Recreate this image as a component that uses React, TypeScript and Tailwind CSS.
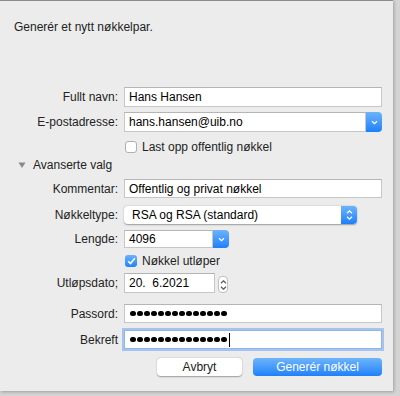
const font = { fontFamily: '"Liberation Sans", Arial, sans-serif' };

function Chevron({ color = "white" }: { color?: string }) {
  return (
    <svg width="7" height="5" viewBox="0 0 7 5">
      <path d="M1 1.2 L3.5 3.6 L6 1.2" fill="none" stroke={color} strokeWidth="1.2" />
    </svg>
  );
}

function UpDown({ color = "white" }: { color?: string }) {
  return (
    <svg width="7" height="12" viewBox="0 0 7 12">
      <path d="M1 4.2 L3.5 1.8 L6 4.2" fill="none" stroke={color} strokeWidth="1.2" />
      <path d="M1 7.8 L3.5 10.2 L6 7.8" fill="none" stroke={color} strokeWidth="1.2" />
    </svg>
  );
}

function Label({ children }: { children: React.ReactNode }) {
  return <div className="w-[118px] shrink-0 text-right text-[12px] text-[#222]">{children}</div>;
}

function Row({ label, className, children }: { label?: string; className: string; children: React.ReactNode }) {
  return (
    <div className={`flex items-center gap-[6px] ${className}`}>
      <Label>{label}</Label>
      {children}
    </div>
  );
}

function TextField({ value, className = "w-[258px]" }: { value: string; className?: string }) {
  return (
    <div className={`flex h-full items-center border border-[#c6c6c6] border-t-[#b5b5b5] bg-white pl-[4px] text-[12px] text-black ${className}`}>
      {value}
    </div>
  );
}

function Dots({ cursor }: { cursor?: boolean }) {
  return (
    <div className="flex items-center gap-[1.5px]">
      {Array.from({ length: 14 }).map((_, i) => (
        <span key={i} className="h-[5.5px] w-[5.5px] rounded-full bg-black" />
      ))}
      {cursor && <span className="ml-[1px] h-[14px] w-[1px] bg-black" />}
    </div>
  );
}

function Checkbox({ checked }: { checked?: boolean }) {
  if (checked)
    return (
      <div className="flex h-[12px] w-[12px] items-center justify-center rounded-[3px] bg-gradient-to-b from-[#69b1fa] to-[#1e84fb]">
        <svg width="9" height="8" viewBox="0 0 9 8">
          <path d="M1.2 4.2 L3.5 6.5 L7.8 1.2" fill="none" stroke="white" strokeWidth="1.6" />
        </svg>
      </div>
    );
  return <div className="h-[12px] w-[12px] rounded-[3px] border border-[#b0b0b0] bg-white" />;
}

export default function App() {
  return (
    <div className="relative h-[396px] w-[400px] overflow-hidden bg-[#d4d4d4]" style={font}>
      <div className="h-[391px] w-[393px] border-t border-[#8c8c8c] bg-[#ececec] shadow-[1px_1px_3px_rgba(0,0,0,0.25)]">
        <div className="mt-[18px] h-[16px] pl-[14px] text-[12px] leading-[16px] text-[#222]">Generér et nytt nøkkelpar.</div>

        <Row label="Fullt navn:" className="mt-[52px] h-[20px]">
          <TextField value="Hans Hansen" />
        </Row>

        <Row label="E-postadresse:" className="mt-[5px] h-[20px]">
          <div className="flex h-full w-[258px]">
            <TextField value="hans.hansen@uib.no" className="flex-1" />
            <div className="flex w-[16px] items-center justify-center rounded-r-[4px] bg-gradient-to-b from-[#6bb2fa] to-[#1a80fb]">
              <Chevron />
            </div>
          </div>
        </Row>

        <Row className="mt-[9px] h-[12px]">
          <div className="ml-[1px] flex items-center gap-[5px]">
            <Checkbox />
            <span className="text-[12px] text-[#222]">Last opp offentlig nøkkel</span>
          </div>
        </Row>

        <div className="mt-[5px] flex h-[14px] items-center pl-[18px]">
          <svg width="8" height="7" viewBox="0 0 8 7">
            <path d="M0.5 0.5 L7.5 0.5 L4 6 Z" fill="#8a8a8a" />
          </svg>
          <span className="ml-[7px] text-[12px] text-[#222]">Avanserte valg</span>
        </div>

        <Row label="Kommentar:" className="mt-[7px] h-[19px]">
          <TextField value="Offentlig og privat nøkkel" />
        </Row>

        <Row label="Nøkkeltype:" className="mt-[8px] h-[18px]">
          <div className="flex h-full w-[233px] rounded-[4px] bg-white shadow-[0_0.5px_1.5px_rgba(0,0,0,0.35)]">
            <div className="flex flex-1 items-center pl-[8px] text-[12px] text-black">RSA og RSA (standard)</div>
            <div className="flex w-[16px] items-center justify-center rounded-r-[4px] bg-gradient-to-b from-[#6bb2fa] to-[#1a80fb]">
              <UpDown />
            </div>
          </div>
        </Row>

        <Row label="Lengde:" className="mt-[6px] h-[18px]">
          <div className="flex h-full w-[105px]">
            <TextField value="4096" className="flex-1" />
            <div className="flex w-[16px] items-center justify-center rounded-r-[4px] bg-gradient-to-b from-[#6bb2fa] to-[#1a80fb]">
              <Chevron />
            </div>
          </div>
        </Row>

        <Row className="mt-[7px] h-[12px]">
          <div className="ml-[1px] flex items-center gap-[5px]">
            <Checkbox checked />
            <span className="text-[12px] text-[#222]">Nøkkel utløper</span>
          </div>
        </Row>

        <Row label="Utløpsdato;" className="mt-[6px] h-[20px]">
          <TextField value="20.  6.2021" className="w-[91px] whitespace-pre" />
          <div className="-ml-[3px] mt-[3px] flex h-[17px] w-[10px] items-center justify-center rounded-[4px] border border-[#c0c0c0] bg-white">
            <UpDown color="#555" />
          </div>
        </Row>

        <Row label="Passord:" className="mt-[11px] h-[19px]">
          <div className="flex h-full w-[258px] items-center border border-[#c6c6c6] border-t-[#b5b5b5] bg-white pl-[5px]">
            <Dots />
          </div>
        </Row>

        <Row label="Bekreft" className="mt-[7px] h-[19px]">
          <div className="flex h-full w-[258px] items-center border border-[#8fb6ea] bg-white pl-[5px] shadow-[0_0_0_2px_rgba(120,170,240,0.6)]">
            <Dots cursor />
          </div>
        </Row>

        <div className="mt-[9px] flex h-[18px] pl-[157px]">
          <div className="flex w-[85px] items-center justify-center rounded-[4px] bg-white text-[12px] text-[#222] shadow-[0_0.5px_1.5px_rgba(0,0,0,0.35)]">
            Avbryt
          </div>
          <div className="ml-[11px] flex w-[129px] items-center justify-center rounded-[4px] bg-gradient-to-b from-[#6cb3fa] to-[#1b81fb] text-[12px] text-white">
            Generér nøkkel
          </div>
        </div>
      </div>
    </div>
  );
}
